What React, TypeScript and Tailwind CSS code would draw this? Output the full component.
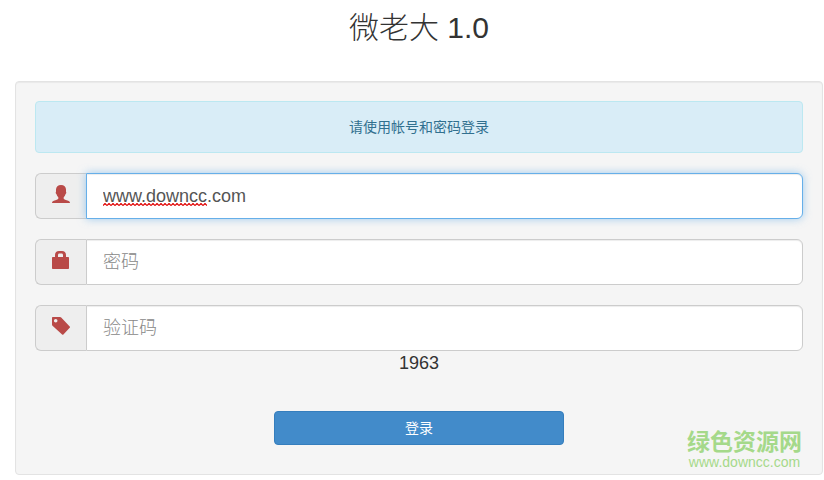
import { useState } from "react";
import type { ReactNode } from "react";

function UserIcon() {
  return (
    <svg viewBox="0 0 18 18" className="size-[18px]" fill="currentColor" aria-hidden="true">
      <path d="M9 0C6 0 4 1.700 4 4.600v2.200c-.5.500-.4 1.700.5 2.500.4 1.300 1 2.300 1.800 2.900v1.500c-.5.700-1.700 1.100-3 1.500C1.200 15.800 0 16.400 0 18h18c0-1.600-1.200-2.200-3.300-2.800-1.300-.4-2.500-.8-3-1.500v-1.500c.8-.6 1.400-1.600 1.800-2.900.9-.8 1-2 .5-2.500V4.600C14 1.700 12 0 9 0Z" />
    </svg>
  );
}

function LockIcon() {
  return (
    <svg viewBox="0 0 18 18" className="size-[18px]" fill="currentColor" aria-hidden="true">
      <path
        fillRule="evenodd"
        d="M3 6V4c0-2.400 1.600-4 4-4h3c2.400 0 4 1.600 4 4v2h2c.6 0 1 .4 1 1v10c0 .6-.4 1-1 1H1c-.6 0-1-.4-1-1V7c0-.6.4-1 1-1h2Zm3 0h5V4c0-.9-.5-1.500-1.500-1.500h-2C6.500 2.500 6 3.100 6 4v2Z"
      />
    </svg>
  );
}

function TagIcon() {
  return (
    <svg viewBox="0 0 18 18" className="size-[18px]" fill="currentColor" aria-hidden="true">
      <path
        fillRule="evenodd"
        d="M0 1c0-.6.4-1 1-1h7c.5 0 .9.200 1.200.5l8.500 9c.4.400.4.900 0 1.300l-6.300 6.700c-.4.400-.9.400-1.300 0L.5 8.800C.2 8.500 0 8 0 7.500V1Zm3.700.900a1.800 1.800 0 1 0 0 3.600 1.800 1.800 0 0 0 0-3.600Z"
      />
    </svg>
  );
}

type FieldProps = {
  id: string;
  label: string;
  type?: string;
  value: string;
  onChange: (value: string) => void;
  icon: ReactNode;
  active?: boolean;
  children?: ReactNode;
};

function Field({ id, label, type = "text", value, onChange, icon, active, children }: FieldProps) {
  return (
    <div className="relative flex h-[46px]">
      <label
        htmlFor={id}
        aria-label={label}
        className="flex w-[51px] shrink-0 items-center justify-center rounded-l-md border border-r-0 border-[#ccc] bg-[#eee] pb-1 text-[#b94a48]"
      >
        {icon}
      </label>
      <input
        id={id}
        type={type}
        value={value}
        placeholder={label}
        spellCheck={false}
        onChange={(e) => onChange(e.target.value)}
        className={`min-w-0 flex-1 rounded-r-md border bg-white px-4 text-lg font-light text-[#555] outline-none placeholder:text-[#888] ${
          active
            ? "border-[#66afe9] shadow-[inset_0_1px_1px_rgba(0,0,0,0.075),0_0_8px_rgba(102,175,233,0.6)]"
            : "border-[#ccc] shadow-[inset_0_1px_1px_rgba(0,0,0,0.075)]"
        }`}
      />
      {children}
    </div>
  );
}

export default function App() {
  const [account, setAccount] = useState("www.downcc.com");
  const [password, setPassword] = useState("");
  const [code, setCode] = useState("");

  return (
    <main className="bg-white pr-px pb-1 pl-[15px] font-['Liberation_Sans','Noto_Sans_CJK_SC',sans-serif] text-sm text-[#333]">
      <h1 className="pt-2 pb-[33px] text-center text-[30px] leading-10 font-light">微老大 1.0</h1>

      <section className="relative rounded border border-[#e3e3e3] bg-[#f5f5f5] px-[19px] pt-[19px] pb-[29px] shadow-[inset_0_1px_1px_rgba(0,0,0,0.05)]">
        <div className="mb-5 rounded border border-[#bce8f1] bg-[#d9edf7] p-[15px] text-center leading-5 text-[#31708f]">
          请使用帐号和密码登录
        </div>

        <form onSubmit={(e) => e.preventDefault()}>
          <div className="flex flex-col gap-5">
            <Field id="account" label="帐号" value={account} onChange={setAccount} icon={<UserIcon />} active>
              {/* spelling mark under the host name */}
              <svg className="absolute top-[30px] left-[68px] h-[3px] w-[104px]" aria-hidden="true">
                <defs>
                  <pattern id="squiggle" width="4" height="3" patternUnits="userSpaceOnUse">
                    <path d="M0 2.5 2 .5 4 2.5" fill="none" stroke="#e00000" strokeWidth="1.2" />
                  </pattern>
                </defs>
                <rect width="104" height="3" fill="url(#squiggle)" />
              </svg>
            </Field>
            <Field id="password" label="密码" type="password" value={password} onChange={setPassword} icon={<LockIcon />} />
            <Field id="code" label="验证码" value={code} onChange={setCode} icon={<TagIcon />} />
          </div>

          <p className="text-center text-lg leading-6">1963</p>

          <button
            type="submit"
            className="mx-auto mt-9 block w-full max-w-[290px] rounded border border-[#357ebd] bg-[#428bca] px-3 py-1.5 leading-5 text-white"
          >
            登录
          </button>
        </form>

        <div className="absolute right-5 bottom-1 text-center text-[#a5d98a]">
          <div className="text-[23px] leading-6 font-bold">绿色资源网</div>
          <div className="text-sm leading-4">www.downcc.com</div>
        </div>
      </section>
    </main>
  );
}
